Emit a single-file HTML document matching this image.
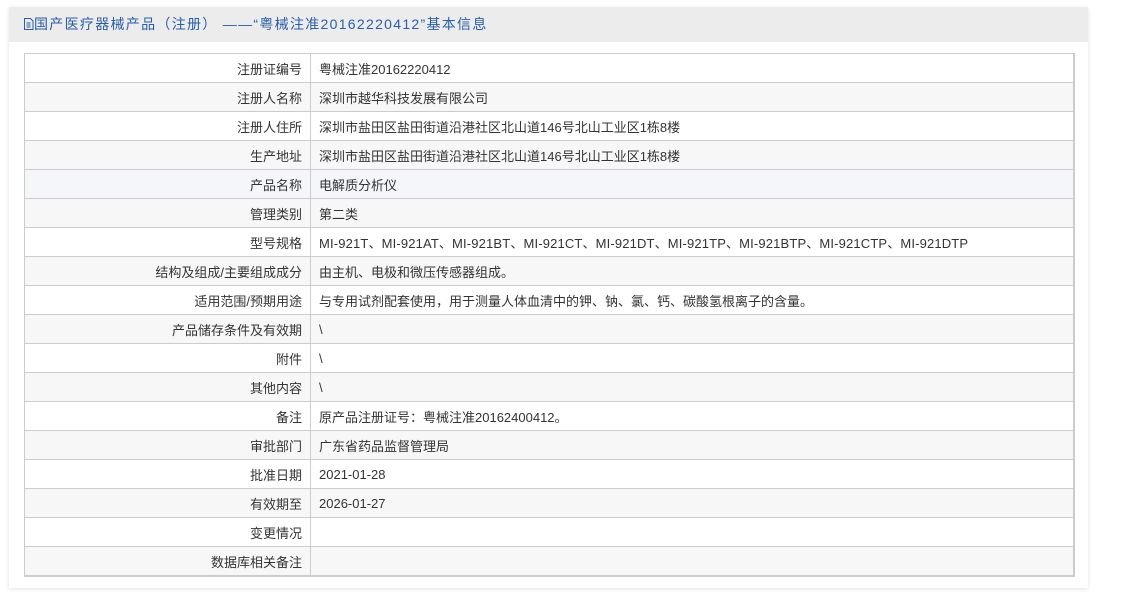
<!DOCTYPE html>
<html><head><meta charset="utf-8"><style>
body{margin:0;background:#fff;font-family:"Liberation Sans","Noto Sans CJK SC",sans-serif;}
.panel{position:absolute;left:9px;top:7px;width:1079px;height:581px;background:#fff;box-shadow:0 1px 4px rgba(0,0,0,0.12);}
.hd{height:35px;background:#ececec;color:#2a5ea8;font-size:14px;line-height:35px;padding-left:14px;letter-spacing:1.3px;}
table{position:absolute;left:15px;top:46px;width:1051px;border-collapse:collapse;border:1px solid #ccc;border-bottom:2px solid #ccc;border-right:2px solid #ccc;}
td{height:28px;border:1px solid #ccc;font-size:13px;color:#333;padding:0 8px;}
td.v{letter-spacing:0.15px;}
td.l{width:269px;text-align:right;}
tr:nth-child(even) td{background:#f7f7f7;}
tr.hl td{background:#f4f6fa;}
</style></head><body>
<div class="panel">
<div class="hd"><svg width="11" height="12" viewBox="0 0 11 12" style="vertical-align:-1px"><path d="M1.5 0.5h6l2.5 2.5v8.5h-8.5z M3.5 5h4 M3.5 7h4 M3.5 9h4" fill="none" stroke="#2a5ea8"/></svg>国产医疗器械产品（注册） ——“粤械注准20162220412”基本信息</div>
<table>
<tr><td class="l">注册证编号</td><td>粤械注准20162220412</td></tr>
<tr><td class="l">注册人名称</td><td>深圳市越华科技发展有限公司</td></tr>
<tr><td class="l">注册人住所</td><td>深圳市盐田区盐田街道沿港社区北山道146号北山工业区1栋8楼</td></tr>
<tr><td class="l">生产地址</td><td>深圳市盐田区盐田街道沿港社区北山道146号北山工业区1栋8楼</td></tr>
<tr class="hl"><td class="l">产品名称</td><td>电解质分析仪</td></tr>
<tr><td class="l">管理类别</td><td>第二类</td></tr>
<tr><td class="l">型号规格</td><td class="v">MI-921T、MI-921AT、MI-921BT、MI-921CT、MI-921DT、MI-921TP、MI-921BTP、MI-921CTP、MI-921DTP</td></tr>
<tr><td class="l">结构及组成/主要组成成分</td><td>由主机、电极和微压传感器组成。</td></tr>
<tr><td class="l">适用范围/预期用途</td><td>与专用试剂配套使用，用于测量人体血清中的钾、钠、氯、钙、碳酸氢根离子的含量。</td></tr>
<tr><td class="l">产品储存条件及有效期</td><td>\</td></tr>
<tr><td class="l">附件</td><td>\</td></tr>
<tr><td class="l">其他内容</td><td>\</td></tr>
<tr><td class="l">备注</td><td>原产品注册证号：粤械注准20162400412。</td></tr>
<tr><td class="l">审批部门</td><td>广东省药品监督管理局</td></tr>
<tr><td class="l">批准日期</td><td>2021-01-28</td></tr>
<tr><td class="l">有效期至</td><td>2026-01-27</td></tr>
<tr><td class="l">变更情况</td><td></td></tr>
<tr><td class="l">数据库相关备注</td><td></td></tr>
</table>
</div>
</body></html>
